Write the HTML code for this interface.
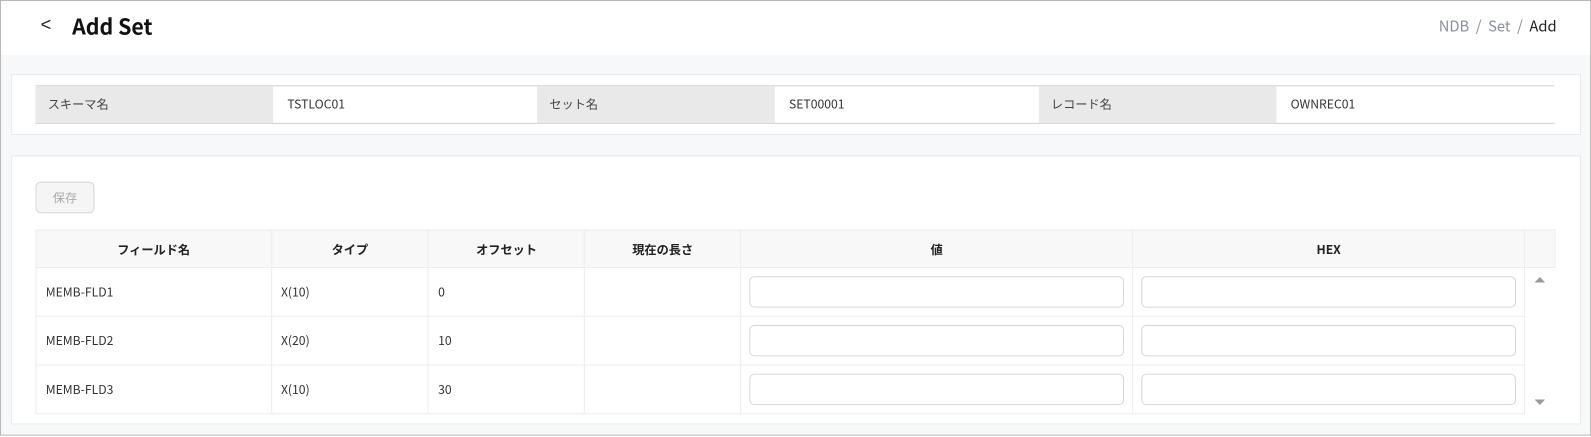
<!DOCTYPE html>
<html><head><meta charset="utf-8"><style>
*{box-sizing:border-box;margin:0;padding:0}
body{width:1591px;height:436px;overflow:hidden;font-family:"Noto Sans CJK JP","Liberation Sans",sans-serif;color:#333;background:#fff}
#w{position:absolute;left:0;top:0;width:1567px;height:430px;transform:scale(1.0154);transform-origin:0 0}
.frame{position:absolute;left:0;top:0;width:1567px;height:429px;border:1px solid #b8b8b8;background:#f7f8fa}
.hdr{position:absolute;left:1px;top:1px;width:1565px;height:53px;background:#fff}
.back{position:absolute;left:39px;top:13px;font-size:18px;color:#222;font-family:"Liberation Sans",sans-serif;font-weight:300}
.title{position:absolute;left:70px;top:10px;font-size:21px;font-weight:bold;color:#111}
.bc{position:absolute;right:33px;top:14px;font-size:14.5px;color:#8a8f99}
.bc b{color:#222;font-weight:normal}
.card{position:absolute;background:#fff;border:1px solid #e8e8e8}
.info{position:absolute;left:35px;top:84px;width:1496px;height:38px;border-top:1px solid #d0d0d0;border-bottom:1px solid #d0d0d0;display:flex;font-size:12px}
.info div{height:36px;line-height:36px;padding-left:12px}
.lab{background:#e9e9e9;color:#444}
.btn{position:absolute;left:35px;top:179px;width:58px;height:31px;border:1px solid #d6d6d6;border-radius:5px;background:#f5f5f5;color:#aaa;font-size:12px;text-align:center;line-height:29px}
table{position:absolute;left:35px;top:226px;border-collapse:collapse;font-size:12px;width:1497px}
td,th{border:1px solid #ececec;height:48px;padding-left:9px;text-align:left;color:#333;font-weight:normal}
th{height:37px;background:#f8f8f8;text-align:center;font-weight:bold;padding:0;color:#222}
.inp{width:369px;height:31px;border:1px solid #d6d6d6;border-radius:5px;background:#fff}
td.i{padding-left:8px}
</style></head><body>
<div id="w">
<div class="frame"></div>
<div class="hdr"><span class="back">&lt;</span><span class="title">Add Set</span>
<span class="bc">NDB &nbsp;/&nbsp; Set &nbsp;/&nbsp; <b>Add</b></span></div>
<div class="card" style="left:11px;top:73px;width:1546px;height:60px"></div>
<div class="info">
<div class="lab" style="width:234px">スキーマ名</div><div style="width:260px;padding-left:14px">TSTLOC01</div>
<div class="lab" style="width:234px">セット名</div><div style="width:260px;padding-left:14px">SET00001</div>
<div class="lab" style="width:234px">レコード名</div><div style="width:274px;padding-left:14px">OWNREC01</div>
</div>
<div class="card" style="left:11px;top:153px;width:1546px;height:265px"></div>
<div class="btn">保存</div>
<table>
<tr><th style="width:232px">フィールド名</th><th style="width:155px">タイプ</th><th style="width:154px">オフセット</th><th style="width:154px">現在の長さ</th><th style="width:386px">値</th><th style="width:386px">HEX</th><th style="width:30px;border-top-right-radius:6px"></th></tr>
<tr><td>MEMB-FLD1</td><td>X(10)</td><td>0</td><td></td><td class="i"><div class="inp"></div></td><td class="i"><div class="inp"></div></td><td style="border:none;border-left:1px solid #ececec;padding:0;position:relative;background:#fff" rowspan="3"><span style="position:absolute;left:9px;top:4px;font-size:11px;color:#999;transform:scaleY(.6)">▲</span><span style="position:absolute;left:9px;bottom:4px;font-size:11px;color:#999;transform:scaleY(.6)">▼</span></td></tr>
<tr><td>MEMB-FLD2</td><td>X(20)</td><td>10</td><td></td><td class="i"><div class="inp"></div></td><td class="i"><div class="inp"></div></td></tr>
<tr><td>MEMB-FLD3</td><td>X(10)</td><td>30</td><td></td><td class="i"><div class="inp"></div></td><td class="i"><div class="inp"></div></td></tr>
</table>
</div>
</body></html>
